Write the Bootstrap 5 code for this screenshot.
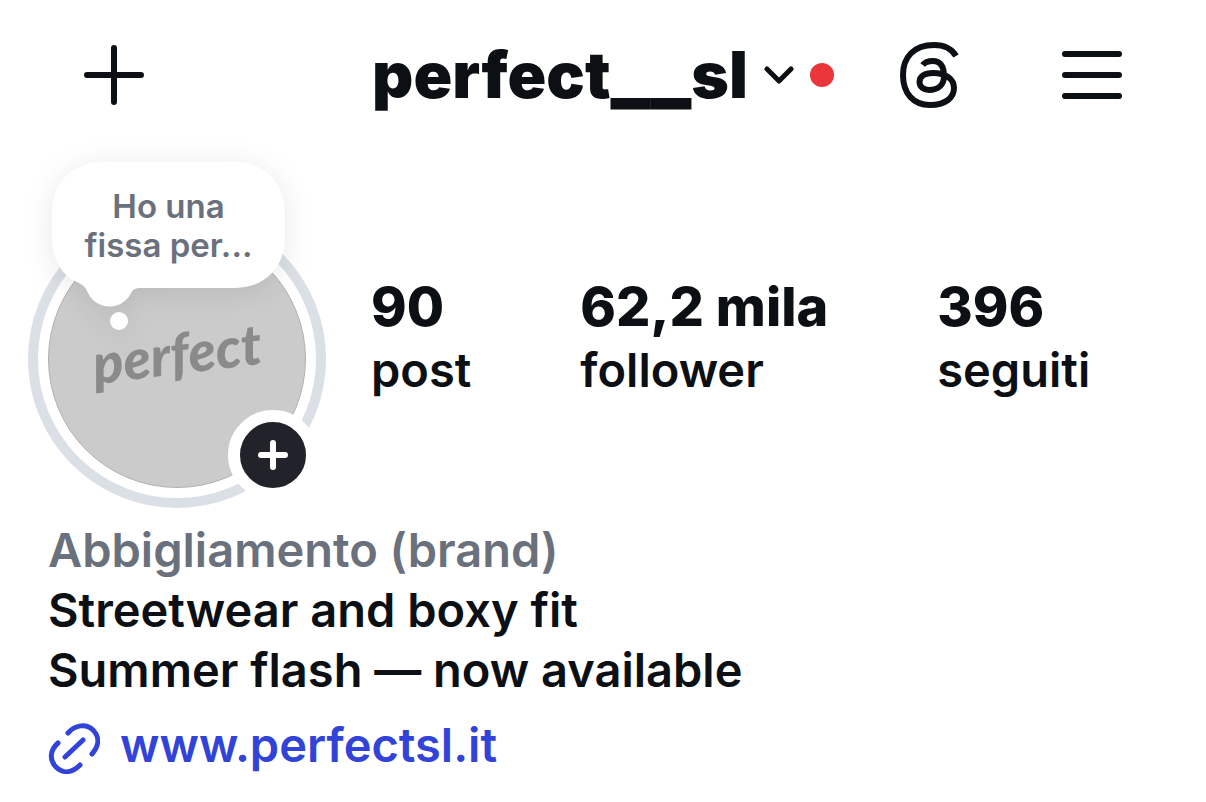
<!DOCTYPE html>
<html lang="it">
<head>
<meta charset="utf-8">
<meta name="viewport" content="width=device-width, initial-scale=1">
<title>perfect__sl</title>
<link href="https://cdn.jsdelivr.net/npm/bootstrap@5.3.0/dist/css/bootstrap.min.css" rel="stylesheet">
<style>
  body { font-family: Inter, "Liberation Sans", sans-serif; color: #0c1014; background: #fff; font-weight: 600; }
  .btn { color: inherit; }
  .topbar { display: grid; grid-template-columns: 1fr auto 1fr; height: 150px; padding: 0 84px; }
  .handle { font-size: 64px; font-weight: 900; line-height: 76px; gap: 16px; }
  .underscores { font-size: 82px; line-height: 1px; }
  .alert-dot { width: 24px; height: 24px; background: #ea3639; }
  .tools { gap: 102px; }
  .profile { padding: 60px 28px 0; gap: 45px; }
  .ring { width: 298px; height: 298px; border: 10px solid #dbdfe6; padding: 10px; }
  .avatar { background: #cbcbcb; border: 1px solid #b0b0b0; padding-bottom: 12px; }
  .wordmark { font: italic 900 56px/60px Lato, sans-serif; color: #8a8a8a; transform: rotate(-7deg); }
  .note { left: 24px; top: -48px; width: 233px; height: 160px; padding-top: 25px; font-size: 33px; line-height: 39px; color: #6a717c; }
  .note svg { left: 0; top: 0; overflow: visible; filter: drop-shadow(0 4px 14px rgba(0,0,0,.09)); }
  .add-story { right: 8px; bottom: 8px; width: 90px; height: 90px; border: 12px solid #fff; background: #22232a; }
  .stats { gap: 109px; padding-bottom: 42px; }
  .stats dt { font-size: 54px; line-height: 64px; font-weight: 800; }
  .stats dd { font-size: 47px; line-height: 62px; }
  .bio { padding: 12px 48px 0; font-size: 47px; line-height: 60px; }
  .category { color: #6a717c; }
  .site { color: #3143d9; gap: 20px; margin-top: 15px; }
  .site svg { margin-top: 5px; }
</style>
</head>
<body>
<header class="topbar align-items-center">
  <button class="btn p-0 border-0 d-flex" aria-label="Crea">
    <svg width="60" height="60" fill="none" stroke="currentColor" stroke-width="6" stroke-linecap="round"><path d="M30 3v54M3 30h54"/></svg>
  </button>
  <button class="btn p-0 border-0 d-flex align-items-center handle">
    <span>perfect<span class="underscores">__</span>sl</span>
    <svg width="30" height="18" fill="none" stroke="currentColor" stroke-width="5" stroke-linecap="round" stroke-linejoin="round"><path d="M3 3l12 12L27 3"/></svg>
    <span class="alert-dot rounded-circle"></span>
  </button>
  <div class="tools d-flex align-items-center justify-content-end">
    <button class="btn p-0 border-0 d-flex" aria-label="Threads">
      <svg width="60" height="66" fill="none" stroke="currentColor" stroke-width="6"><path d="M56 14C52 7 44 3 34 3 14 3 3 15 3 33s10 30 27 30c15 0 24-7 24-17 0-9-8-15-21-15-8 0-13.500 3-13.500 9 0 5 4.500 8 9.500 8 9 0 15-5 15-14 0-10-4-15-11-15-5 0-8 1-10.300 4"/></svg>
    </button>
    <button class="btn p-0 border-0 d-flex" aria-label="Menu">
      <svg width="60" height="50" fill="none" stroke="currentColor" stroke-width="6" stroke-linecap="round"><path d="M3 4h54M3 25h54M3 46h54"/></svg>
    </button>
  </div>
</header>
<main>
  <section class="profile d-flex align-items-center">
    <div class="position-relative flex-shrink-0">
      <div class="ring rounded-circle">
        <div class="avatar rounded-circle w-100 h-100 d-flex align-items-center justify-content-center"><span class="wordmark">perfect</span></div>
      </div>
      <div class="note position-absolute text-center">
        <svg class="position-absolute" width="233" height="160" fill="#fff" aria-hidden="true"><path d="M52 0H181C213 0 233 20 233 52V74C233 106 213 126 181 126H88C80 126 80 130 78 133 67 150 43 148 35 129 33 124 29 122 23 119 8 112 0 94 0 74V52C0 20 20 0 52 0Z"/><circle cx="67" cy="159" r="9"/></svg>
        <div class="position-relative">Ho una<br>fissa per...</div>
      </div>
      <button class="btn p-0 add-story rounded-circle position-absolute d-flex align-items-center justify-content-center" aria-label="Aggiungi alla storia">
        <svg width="30" height="30" fill="none" stroke="#fff" stroke-width="6" stroke-linecap="round"><path d="M15 3v24M3 15h24"/></svg>
      </button>
    </div>
    <dl class="stats d-flex mb-0">
      <div><dt>90</dt><dd class="mb-0">post</dd></div>
      <div><dt>62,2 mila</dt><dd class="mb-0">follower</dd></div>
      <div><dt>396</dt><dd class="mb-0">seguiti</dd></div>
    </dl>
  </section>
  <section class="bio">
    <div class="category">Abbigliamento (brand)</div>
    <div>Streetwear and boxy fit</div>
    <div>Summer flash — now available</div>
    <a class="site d-inline-flex align-items-center text-decoration-none" href="https://www.perfectsl.it">
      <svg width="52" height="52" fill="none" stroke="currentColor" stroke-width="5" stroke-linecap="round" aria-hidden="true"><path d="M20 11C27 3 38 1 45 8s6 16-1 24M10 21C2 28 1 38 8 45s16 6 24-2M17 35l18-17"/></svg>
      <span>www.perfectsl.it</span>
    </a>
  </section>
</main>
<script src="https://cdn.jsdelivr.net/npm/bootstrap@5.3.0/dist/js/bootstrap.bundle.min.js"></script>
</body>
</html>
